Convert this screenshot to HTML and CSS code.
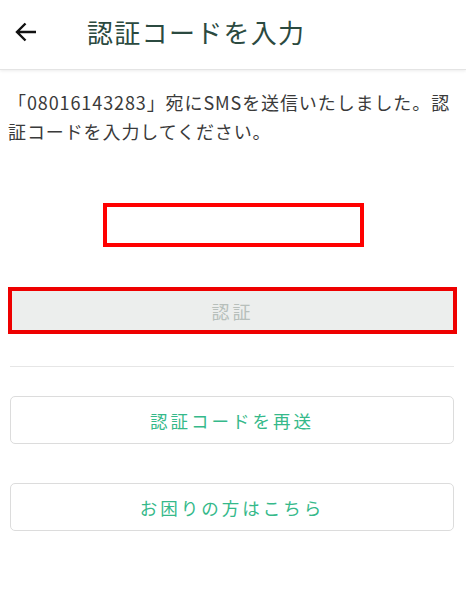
FILE: index.html
```html
<!DOCTYPE html>
<html lang="ja">
<head>
<meta charset="utf-8">
<link rel="stylesheet" href="styles.css">
</head>
<body>
<header class="appbar">
  <svg class="back" width="22" height="20" viewBox="0 0 22 20" aria-hidden="true">
    <path d="M21 10H2.5M10.5 1.5L2 10l8.5 8.5" fill="none" stroke="#111" stroke-width="2.4"/>
  </svg>
  <h1 class="title">認証コードを入力</h1>
</header>
<main class="content">
  <p class="desc">「08016143283」宛にSMSを送信いたしました。認証コードを入力してください。</p>
  <div class="code-input"></div>
  <button class="btn-verify">認証</button>
  <hr class="divider">
  <button class="btn-outline">認証コードを再送</button>
  <button class="btn-outline help">お困りの方はこちら</button>
</main>
</body>
</html>
```
FILE: styles.css
```css
* { box-sizing: border-box; }
body {
  margin: 0;
  background: #fff;
  font-family: "Noto Sans CJK JP", "Noto Sans", sans-serif;
  width: 466px;
}
.appbar {
  height: 70px;
  display: flex;
  align-items: center;
  padding-bottom: 6px;
  border-bottom: 1px solid #e4e4e4;
  box-shadow: 0 1px 3px rgba(0,0,0,0.08);
}
.back {
  margin-left: 15px;
  flex: none;
}
.title {
  margin: 0 0 0 50px;
  font-size: 26px;
  font-weight: 400;
  color: #2b4a40;
  letter-spacing: 1.3px;
}
.content {
  display: flex;
  flex-direction: column;
}
.desc {
  margin: 18px 0 0 0;
  padding: 0 10px 0 8px;
  font-size: 18px;
  line-height: 29px;
  letter-spacing: 0.9px;
  color: #3a3a3a;
}
.code-input {
  align-self: center;
  width: 261px;
  height: 44px;
  margin-top: 57px;
  border: 4px solid #f00;
}
.btn-verify {
  margin: 40px 0 0 8px;
  width: 449px;
  height: 47px;
  border: 4px solid #ee0000;
  background: #eceeed;
  color: #b7bfbb;
  font-family: inherit;
  font-size: 18px;
  letter-spacing: 3px;
}
.divider {
  margin: 32px 12px 0 10px;
  border: none;
  border-top: 1px solid #e6e6e6;
  height: 0;
}
.btn-outline {
  margin: 29px 12px 0 10px;
  height: 48px;
  border: 1px solid #dcdcdc;
  border-radius: 5px;
  background: #fff;
  color: #35b98a;
  font-family: inherit;
  font-size: 17.5px;
  letter-spacing: 3px;
}
.help { margin-top: 39px; }
```
